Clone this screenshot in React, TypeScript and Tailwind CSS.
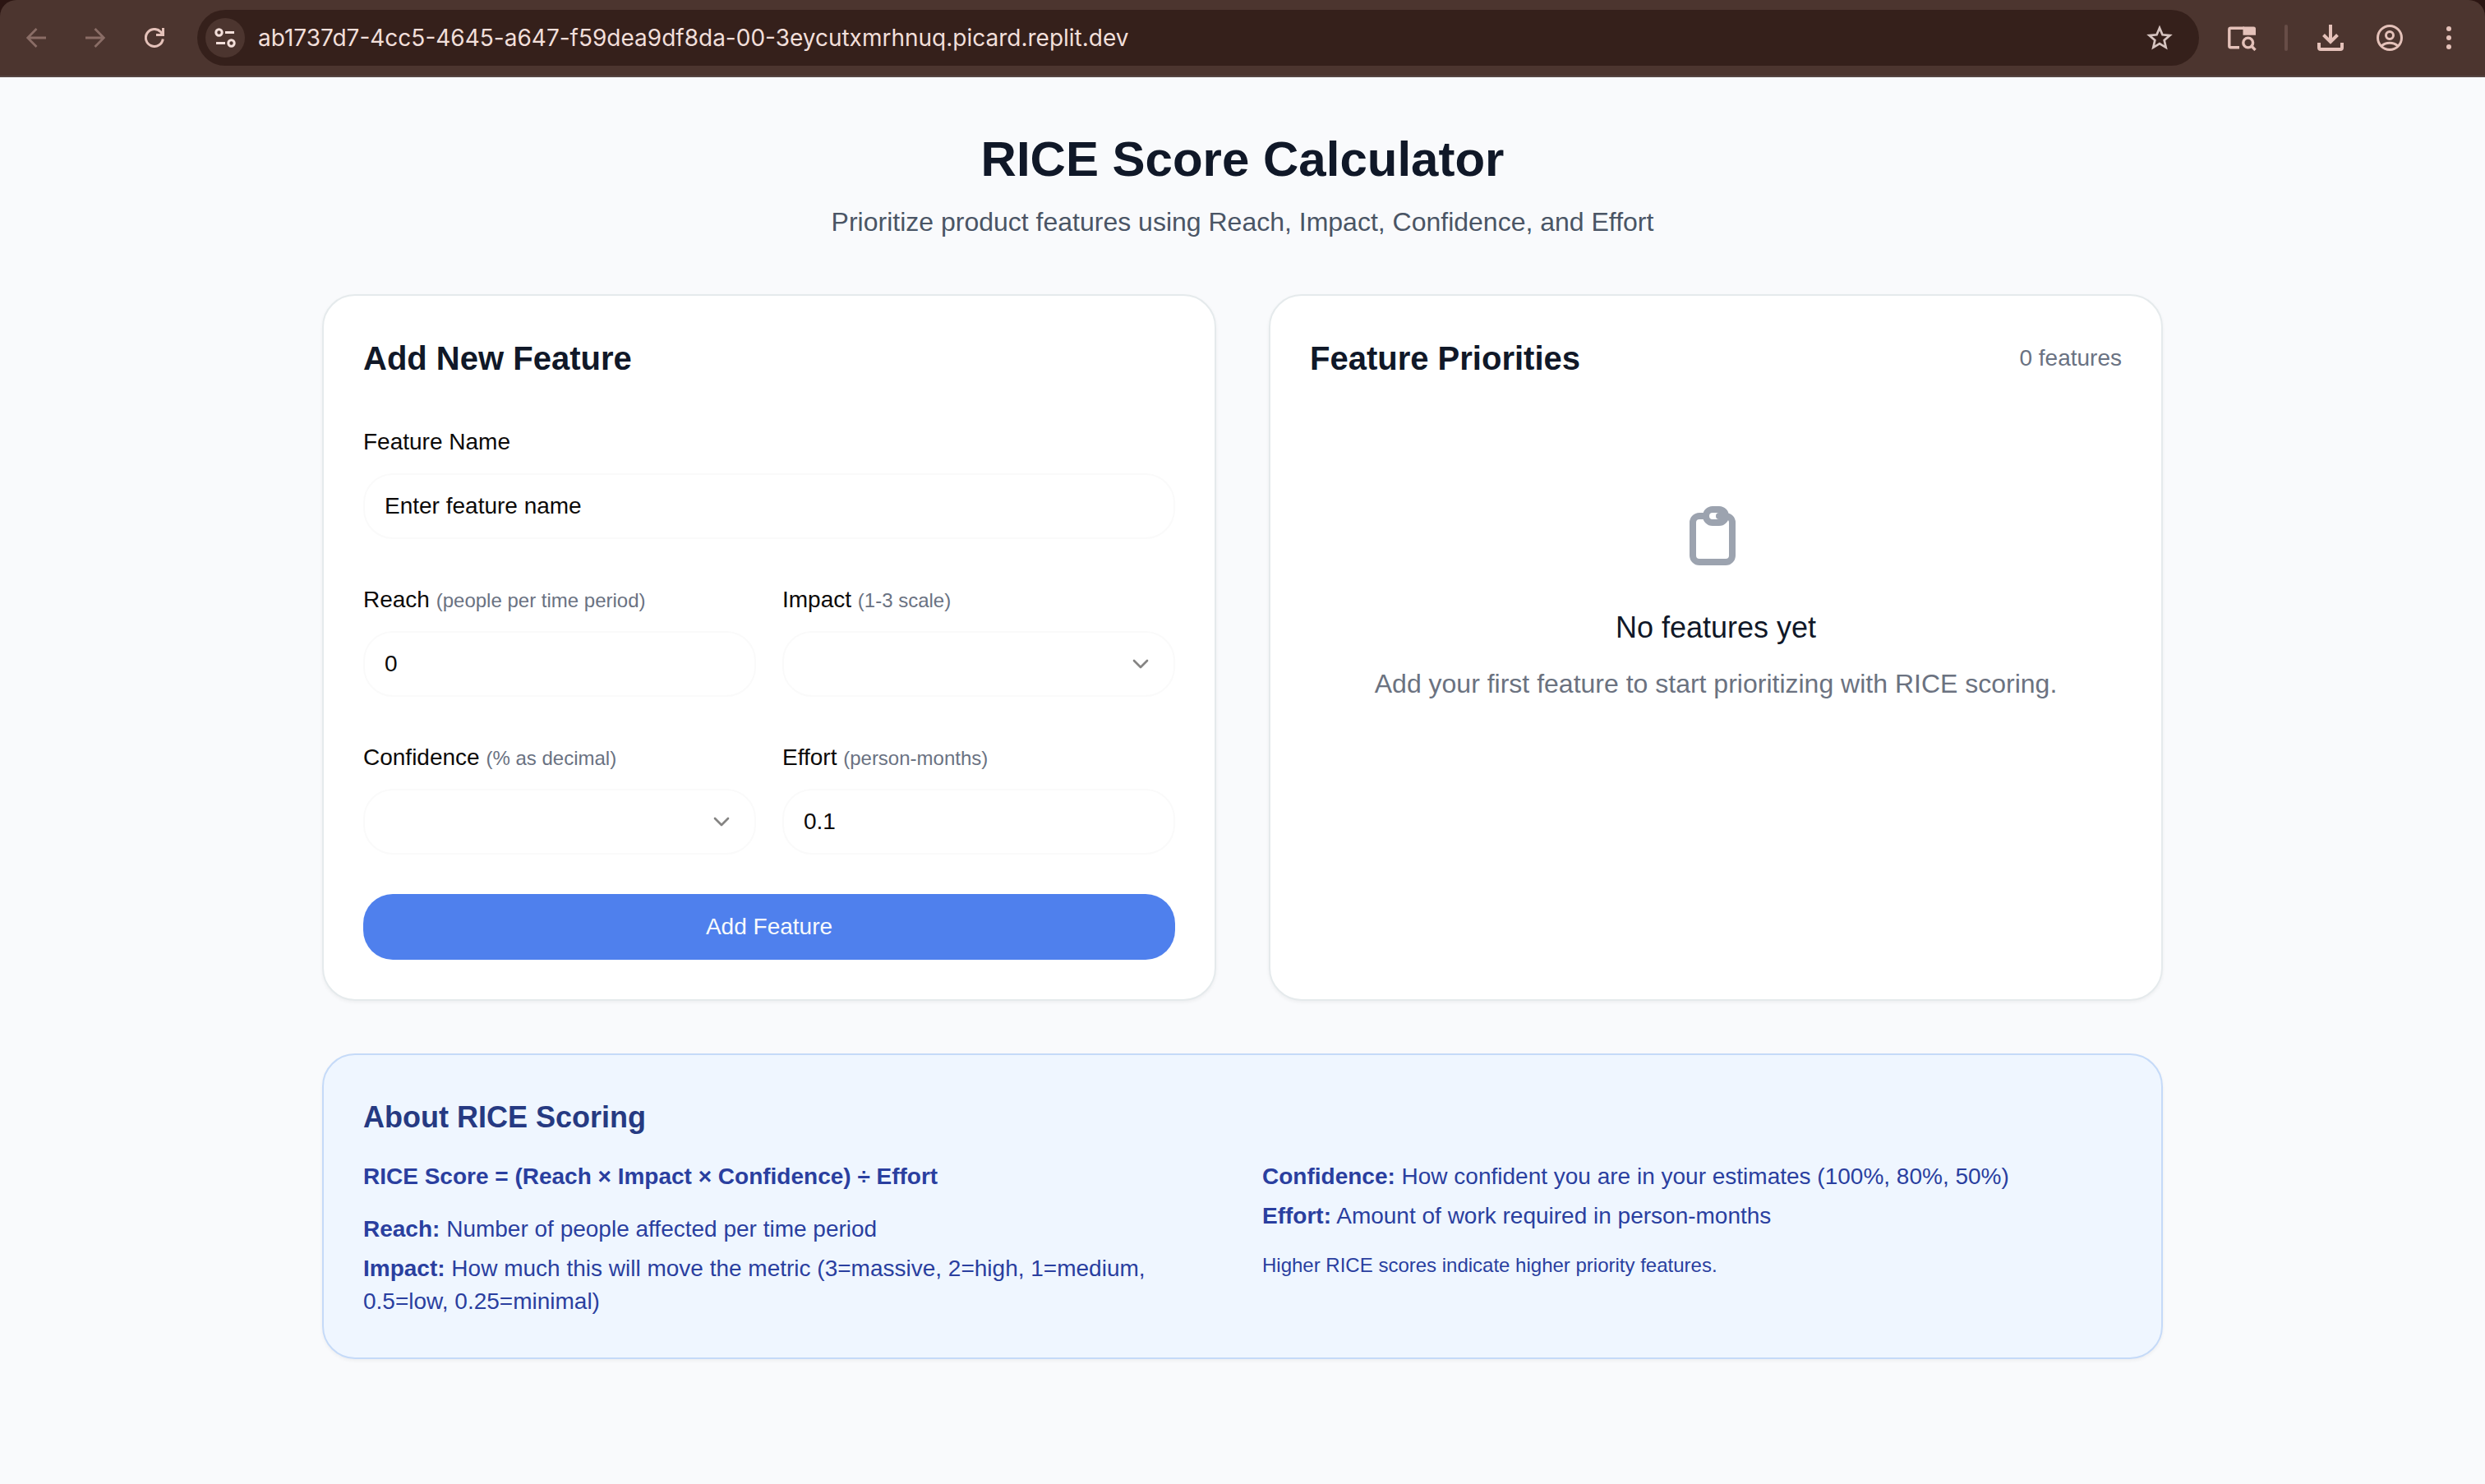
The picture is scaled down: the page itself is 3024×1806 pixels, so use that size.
import { useId, useState, type ReactNode } from "react";

const URL_TEXT = "ab1737d7-4cc5-4645-a647-f59dea9df8da-00-3eycutxmrhnuq.picard.replit.dev";

function ToolButton({ label, children }: { label: string; children: ReactNode }) {
  return (
    <button type="button" aria-label={label} className="flex size-12 shrink-0 items-center justify-center">
      {children}
    </button>
  );
}

function BrowserBar() {
  return (
    <div className="bg-[#2b1512]">
      <header className="flex h-[94px] items-center rounded-t-[20px] border-b-2 border-[#564542] bg-[#4c352f] px-5 text-[#e4c1b9]">
        <nav aria-label="Browser navigation" className="flex items-center gap-6 text-[#8a6d66]">
          <ToolButton label="Back">
            <svg viewBox="0 0 24 24" className="size-6" fill="none" stroke="currentColor" strokeWidth="2.8">
              <path d="M24 12H2M12.5 1 1.700 12l10.800 11" />
            </svg>
          </ToolButton>
          <ToolButton label="Forward">
            <svg viewBox="0 0 24 24" className="size-6" fill="none" stroke="currentColor" strokeWidth="2.8">
              <path d="M0 12h22M11.500 1l10.800 11-10.800 11" />
            </svg>
          </ToolButton>
          <ToolButton label="Reload">
            <svg viewBox="0 0 24 24" className="size-6 text-[#e4c1b9]" fill="none" stroke="currentColor" strokeWidth="3">
              <path d="M22.300 13.500A10.500 10.500 0 1 1 19.500 4.700L22 8" />
              <path d="M22.500 0v8.500H14" />
            </svg>
          </ToolButton>
        </nav>
        <div className="ml-7 flex h-[68px] min-w-0 grow items-center rounded-full bg-[#35201b] pr-6 pl-[10px]">
          <button type="button" aria-label="Site information" className="flex size-12 shrink-0 items-center justify-center rounded-full bg-[#4c352f] text-[#f3dfda]">
            <svg viewBox="0 0 26 24" className="h-6 w-[26px]" fill="none" stroke="currentColor" strokeWidth="3">
              <circle cx="5.500" cy="5.500" r="3.700" />
              <path d="M13 5.500h11M2 18.500h11" />
              <circle cx="20.500" cy="18.500" r="3.700" />
            </svg>
          </button>
          <input
            type="text"
            aria-label="Address"
            defaultValue={URL_TEXT}
            className="ml-4 min-w-0 grow bg-transparent font-[Inter,sans-serif] text-[28px] leading-10 text-[#f1dfda] outline-none"
          />
          <ToolButton label="Bookmark this page">
            <svg viewBox="0 0 32 32" className="size-8 text-[#d6c4c0]" fill="none" stroke="currentColor" strokeWidth="2.7">
              <path d="M16 4l3.500 8.300 9 .8-6.800 5.900 2 8.800L16 23.100l-7.700 4.700 2-8.800-6.800-5.900 9-.8z" />
            </svg>
          </ToolButton>
        </div>
        <div className="ml-7 flex items-center">
          <ToolButton label="Search tabs">
            <svg viewBox="0 0 36 32" className="h-8 w-9" fill="none" stroke="currentColor" strokeWidth="3.4">
              <path d="M15 27.800H4.500a1.700 1.700 0 0 1-1.700-1.700V6a1.700 1.700 0 0 1 1.700-1.700H21" />
              <path d="M19.500 2.600h13a2.500 2.500 0 0 1 2.500 2.500V12.800H19.500z" fill="currentColor" stroke="none" />
              <circle cx="25.700" cy="22" r="5.900" />
              <path d="M29.800 26l4.700 4.900" />
            </svg>
          </ToolButton>
          <div className="mx-7 h-8 w-1 rounded-full bg-[#674d47]" />
          <ToolButton label="Downloads">
            <svg viewBox="0 0 32 32" className="size-8" fill="none" stroke="currentColor" strokeWidth="4">
              <path d="M16 0v20M7.500 12.500L16 21l8.500-8.500M2 22v6a2 2 0 0 0 2 2h24a2 2 0 0 0 2-2v-6" />
            </svg>
          </ToolButton>
          <div className="ml-6 flex items-center gap-6">
            <ToolButton label="Profile">
              <svg viewBox="0 0 32 32" className="size-8" fill="none" stroke="currentColor" strokeWidth="3">
                <circle cx="16" cy="16" r="14.500" />
                <circle cx="16" cy="13" r="4.500" />
                <path d="M6 26c5.500-5 14.500-5 20 0" />
              </svg>
            </ToolButton>
            <ToolButton label="More">
              <svg viewBox="0 0 32 32" className="size-8" fill="currentColor">
                <circle cx="16" cy="5" r="3" />
                <circle cx="16" cy="16" r="3" />
                <circle cx="16" cy="27" r="3" />
              </svg>
            </ToolButton>
          </div>
        </div>
      </header>
    </div>
  );
}

const CONTROL =
  "h-20 w-full appearance-none rounded-[36px] border-2 border-[#fafafa] bg-white px-6 text-[28px] leading-10 text-[#0c0a09] outline-none placeholder:text-[#0c0a09]";

function Field({ id, label, hint, children }: { id: string; label: string; hint?: string; children: ReactNode }) {
  return (
    <div className="flex flex-col gap-4">
      <div className="text-[32px] leading-12">
        <label htmlFor={id} className="text-[28px] leading-8 text-[#0c0a09]">
          {label} {hint && <span className="text-2xl leading-8 text-gray-500">{hint}</span>}
        </label>
      </div>
      {children}
    </div>
  );
}

function SelectField({ label, hint, options }: { label: string; hint: string; options: string[] }) {
  const id = useId();
  const [value, setValue] = useState("");
  return (
    <Field id={id} label={label} hint={hint}>
      <div className="relative">
        <select id={id} value={value} onChange={(e) => setValue(e.target.value)} className={CONTROL}>
          <option value="" />
          {options.map((o) => (
            <option key={o} value={o}>
              {o}
            </option>
          ))}
        </select>
        <svg
          viewBox="0 0 24 24"
          className="pointer-events-none absolute top-6 right-[26px] size-8 text-[#858483]"
          fill="none"
          stroke="currentColor"
          strokeWidth="2"
          strokeLinecap="round"
          strokeLinejoin="round"
        >
          <path d="m6 9 6 6 6-6" />
        </svg>
      </div>
    </Field>
  );
}

function FeatureForm() {
  const id = useId();
  return (
    <section className="rounded-[40px] border-2 border-[#e5eaec] bg-white p-12 shadow-[0_2px_4px_rgba(0,0,0,0.05)]">
      <h2 className="mb-12 text-[40px] leading-14 font-semibold text-gray-900">Add New Feature</h2>
      <form className="flex flex-col gap-12" onSubmit={(e) => e.preventDefault()}>
        <Field id={id + "name"} label="Feature Name">
          <input id={id + "name"} type="text" placeholder="Enter feature name" className={CONTROL} />
        </Field>
        <div className="grid grid-cols-2 gap-x-8 gap-y-12">
          <Field id={id + "reach"} label="Reach" hint="(people per time period)">
            <input id={id + "reach"} type="text" inputMode="numeric" defaultValue="0" className={CONTROL} />
          </Field>
          <SelectField label="Impact" hint="(1-3 scale)" options={["3", "2", "1", "0.5", "0.25"]} />
          <SelectField label="Confidence" hint="(% as decimal)" options={["1.0", "0.8", "0.5"]} />
          <Field id={id + "effort"} label="Effort" hint="(person-months)">
            <input id={id + "effort"} type="text" inputMode="decimal" defaultValue="0.1" className={CONTROL} />
          </Field>
        </div>
        <button type="submit" className="h-20 rounded-[36px] bg-[#4f80ed] text-[28px] leading-10 text-[#f8fafc]">
          Add Feature
        </button>
      </form>
    </section>
  );
}

function Priorities() {
  return (
    <section className="rounded-[40px] border-2 border-[#e5eaec] bg-white p-12 shadow-[0_2px_4px_rgba(0,0,0,0.05)]">
      <div className="mb-12 flex items-center justify-between">
        <h2 className="text-[40px] leading-14 font-semibold text-gray-900">Feature Priorities</h2>
        <span className="text-[28px] leading-10 text-gray-500">0 features</span>
      </div>
      <div className="flex flex-col items-center py-24 text-center">
        <svg
          viewBox="0 0 24 24"
          className="mb-8 size-24 text-[#9ca3af]"
          fill="none"
          stroke="currentColor"
          strokeWidth="2"
          strokeLinecap="round"
          strokeLinejoin="round"
        >
          <path d="M9 5H7a2 2 0 0 0-2 2v10a2 2 0 0 0 2 2h8a2 2 0 0 0 2-2V7a2 2 0 0 0-2-2h-2M9 5a2 2 0 0 0 2 2h2a2 2 0 0 0 2-2M9 5a2 2 0 0 1 2-2h2a2 2 0 0 1 2 2" />
        </svg>
        <h3 className="mb-4 text-4xl leading-14 text-gray-900">No features yet</h3>
        <p className="text-[32px] leading-12 text-[#6b7280]">Add your first feature to start prioritizing with RICE scoring.</p>
      </div>
    </section>
  );
}

function AboutRice() {
  return (
    <section className="rounded-[40px] border-2 border-[#c5daf8] bg-[#eff6ff] p-12 text-[28px] leading-10 text-[#2a3f9f] shadow-[0_2px_4px_rgba(0,0,0,0.05)]">
      <h3 className="mb-6 text-4xl leading-14 font-semibold text-[#263a82]">About RICE Scoring</h3>
      <div className="grid grid-cols-2 gap-12">
        <div>
          <p className="mb-6 font-bold">RICE Score = (Reach × Impact × Confidence) ÷ Effort</p>
          <p className="mb-2">
            <strong>Reach:</strong> Number of people affected per time period
          </p>
          <p>
            <strong>Impact:</strong> How much this will move the metric (3=massive, 2=high, 1=medium, 0.5=low, 0.25=minimal)
          </p>
        </div>
        <div>
          <p className="mb-2">
            <strong>Confidence:</strong> How confident you are in your estimates (100%, 80%, 50%)
          </p>
          <p className="mb-6">
            <strong>Effort:</strong> Amount of work required in person-months
          </p>
          <p className="text-2xl leading-8">Higher RICE scores indicate higher priority features.</p>
        </div>
      </div>
    </section>
  );
}

export default function App() {
  return (
    <div className="min-h-screen bg-[#f9fafc] font-['Liberation_Sans',Arial,sans-serif]">
      <BrowserBar />
      <main className="mx-auto flex max-w-[2304px] flex-col gap-16 px-8 py-16">
        <div className="text-center">
          <h1 className="mb-4 text-6xl leading-[72px] font-bold text-gray-900">RICE Score Calculator</h1>
          <p className="text-[32px] leading-12 text-gray-600">
            Prioritize product features using Reach, Impact, Confidence, and Effort
          </p>
        </div>
        <div className="grid grid-cols-2 gap-16">
          <FeatureForm />
          <Priorities />
        </div>
        <AboutRice />
      </main>
    </div>
  );
}
